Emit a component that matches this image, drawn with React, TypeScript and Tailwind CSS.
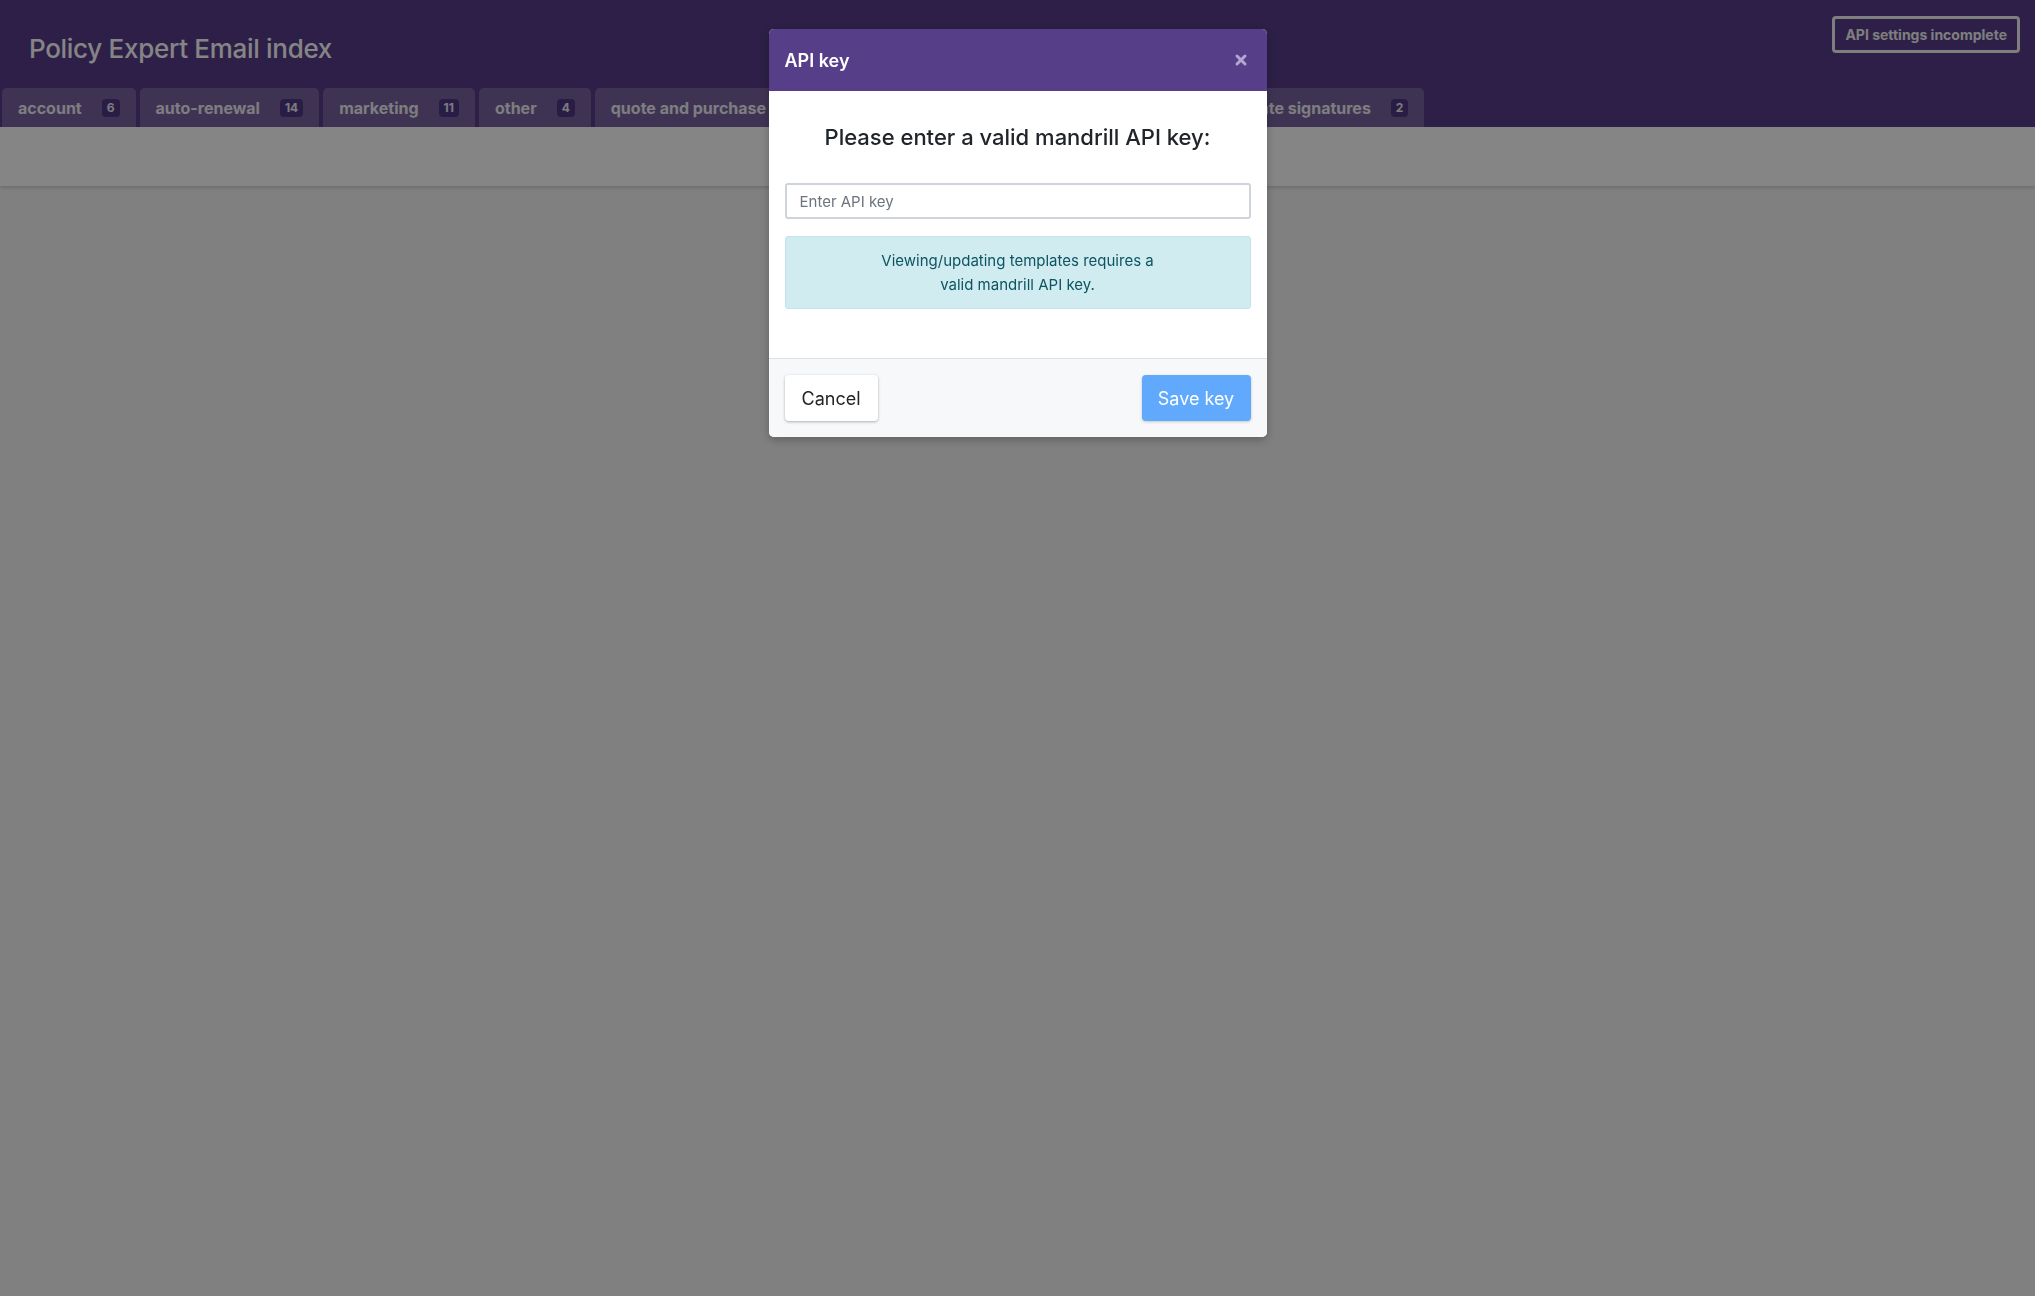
import { X } from "lucide-react"

const tabs = [
  { name: "account", count: 6 },
  { name: "auto-renewal", count: 14 },
  { name: "marketing", count: 11 },
  { name: "other", count: 4 },
  { name: "quote and purchase", count: 19 },
  { name: "renewal notices", count: 7 },
  { name: "self-service", count: 15 },
  { name: "template signatures", count: 2 },
]

export default function App() {
  return (
    <div className="min-h-screen bg-[#f5f5f5] font-['Inter',sans-serif]">
      {/* header */}
      <header className="bg-[#563d88]">
        <div className="flex items-start justify-between h-[88px]">
          <h1 className="mt-[31px] ml-[29px] text-[26px] leading-[36px] font-medium text-white tracking-[-0.3px]">
            Policy Expert Email index
          </h1>
          <button className="mt-[16px] mr-[15px] h-[37px] px-[10px] rounded-[4px] border-[3px] border-[#f2f2f2] text-[14px] font-bold text-[#f2f2f2]">
            API settings incomplete
          </button>
        </div>
        <nav className="flex gap-[4px] px-[2px]">
          {tabs.map((tab) => (
            <div
              key={tab.name}
              className="h-[39px] px-4 flex items-center rounded-t-[5px] bg-white/20 text-[16px] font-bold text-white/90"
            >
              {tab.name}
              <span className="ml-[20px] h-[18px] min-w-[17px] px-[5px] rounded-[4px] bg-[#513885] text-[12px] leading-[18px] text-center text-white/90">
                {tab.count}
              </span>
            </div>
          ))}
        </nav>
      </header>

      {/* toolbar */}
      <div className="h-[59px] bg-white shadow-[0_2px_3px_rgba(0,0,0,0.14)]" />

      {/* backdrop */}
      <div className="fixed inset-0 bg-[rgba(0,0,0,0.48)]" />

      {/* modal */}
      <div className="fixed inset-0 flex justify-center items-start pt-[29px]">
        <div className="w-[498px] rounded-[5px] bg-white overflow-hidden shadow-[0_3px_10px_rgba(0,0,0,0.25)]">
          <div className="h-[62px] bg-[#573e88] px-4 flex items-center justify-between">
            <h2 className="text-[18px] font-semibold text-white">API key</h2>
            <X className="w-[16px] h-[16px] text-[#b3a6d2] mr-[2px]" strokeWidth={4.5} />
          </div>

          <div className="px-4 pt-[30px] pb-[49px]">
            <p className="text-center text-[22px] leading-[32px] font-medium text-[#212529]">
              Please enter a valid mandrill API key:
            </p>
            <input
              className="mt-[30px] w-full h-[36px] px-[13px] rounded-[3px] border-2 border-[#ced4da] text-[15px] text-[#495057] placeholder:text-[#6c757d] outline-none"
              placeholder="Enter API key"
            />
            <div className="mt-[17px] h-[73px] rounded-[3px] border border-[#bee5eb] bg-[#d1ecf1] flex items-center justify-center text-center text-[15px] leading-[24px] text-[#0c5460]">
              <p>
                Viewing/updating templates requires a<br />
                valid mandrill API key.
              </p>
            </div>
          </div>

          <div className="h-[79px] border-t border-[#dee2e6] bg-[#f7f8fa] px-4 flex items-center justify-between">
            <button className="h-[46px] w-[93px] rounded-[4px] bg-white text-[18px] text-[#212529] shadow-[0_1px_3px_rgba(0,0,0,0.3)]">
              Cancel
            </button>
            <button className="h-[46px] w-[109px] rounded-[4px] bg-[#60a9fc] text-[18px] text-white shadow-[0_1px_3px_rgba(0,0,0,0.2)]">
              Save key
            </button>
          </div>
        </div>
      </div>
    </div>
  )
}
